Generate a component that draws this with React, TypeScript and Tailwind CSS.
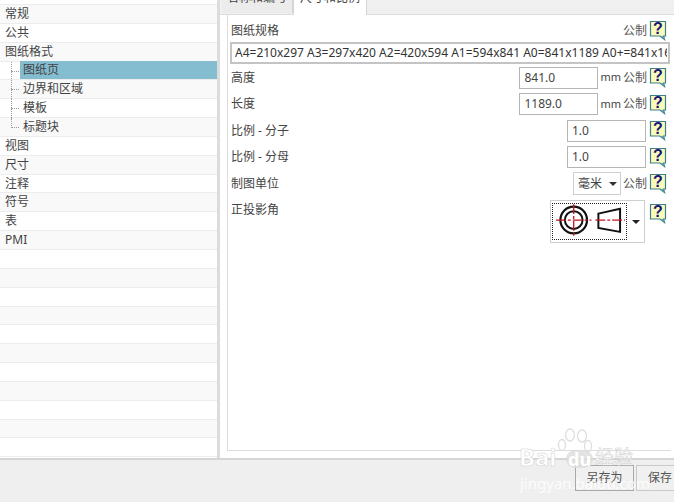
const treeItems = [
  { label: "", h: "h-[5px]" },
  { label: "常规" },
  { label: "公共" },
  { label: "图纸格式" },
  { label: "图纸页", child: true, selected: true },
  { label: "边界和区域", child: true },
  { label: "模板", child: true },
  { label: "标题块", child: true, last: true },
  { label: "视图" },
  { label: "尺寸" },
  { label: "注释" },
  { label: "符号" },
  { label: "表" },
  { label: "PMI" },
  ...Array.from({ length: 11 }, () => ({ label: "" })),
];

function TreeRow({ item, index }: { item: any; index: number }) {
  return (
    <div
      className={`relative flex shrink-0 items-center border-b border-[#ececec] ${item.h ?? "h-[18.85px]"} ${
        index % 2 === 1 ? "bg-[#f9f9f9]" : "bg-white"
      }`}
    >
      {item.child ? (
        <>
          <span
            className={`absolute left-[11px] top-0 border-l border-dotted border-[#999] ${
              item.last ? "h-[10px]" : "h-[19px]"
            }`}
          />
          <span className="absolute left-[11px] top-[9px] w-[8px] border-t border-dotted border-[#999]" />
          <span
            className={`ml-[20px] flex h-[18px] flex-1 items-center pl-[3px] ${
              item.selected ? "bg-[#84bdd0]" : ""
            }`}
          >
            {item.label}
          </span>
        </>
      ) : (
        <span className="pl-[5px]">{item.label}</span>
      )}
    </div>
  );
}

function HelpIcon({ className = "" }: { className?: string }) {
  return (
    <svg width="18" height="21" viewBox="0 0 18 21" className={`shrink-0 ${className}`}>
      <path d="M1.5 1.5h15v14.5h-2l1 3.500-4.500-3.500H1.500z" fill="#fbfbb8" stroke="#3d7f8e" strokeWidth="1.200" />
      <path d="M12 16.500l3.500 3-0.700-3.500z" fill="#4d9aa8" />
      <text x="9" y="14" textAnchor="middle" fontSize="16" fontWeight="700" fill="#16167e" fontFamily="Liberation Sans, sans-serif">
        ?
      </text>
    </svg>
  );
}

function NumberInput({ value }: { value: string }) {
  return <div className="flex h-[22px] w-[79px] items-center border border-[#b5b5b5] bg-white pl-[4px]">{value}</div>;
}

function FormRow({ label, height, children }: { label: string; height: string; children: React.ReactNode }) {
  return (
    <div className={`flex items-center pr-[4px] ${height}`}>
      <span className="flex-1">{label}</span>
      {children}
    </div>
  );
}

function Metric() {
  return <span className="mr-[2px] ml-[2px] text-[#555]">公制</span>;
}

function Mm() {
  return <span className="ml-[2px] text-[11px]">mm</span>;
}

function ProjectionIcon() {
  return (
    <svg width="74" height="35" viewBox="0 0 74 35">
      <circle cx="21" cy="16" r="13.500" fill="none" stroke="#111" strokeWidth="2.200" />
      <circle cx="21" cy="16" r="9" fill="none" stroke="#111" strokeWidth="2" />
      <path d="M46 9.500l22-5v23.500l-22-4z" fill="none" stroke="#111" strokeWidth="2" />
      <path d="M3 16h36M43 16h30M21 0v32" stroke="#c0141f" strokeWidth="1.300" strokeDasharray="10 2 3 2" />
    </svg>
  );
}

export default function App() {
  return (
    <div
      className="relative flex h-[502px] w-[674px] flex-col overflow-hidden bg-[#efefef] text-[12px] text-[#444]"
      style={{ fontFamily: '"Noto Sans", "Noto Sans CJK SC", sans-serif' }}
    >
      <div className="flex h-[460px] shrink-0 border-b-2 border-[#d5d5d5]">
        <div className="flex w-[220px] shrink-0 flex-col overflow-hidden border-r-[3px] border-[#dcdcdc] bg-white">
          {treeItems.map((item, i) => (
            <TreeRow key={i} item={item} index={i} />
          ))}
        </div>

        <div className="flex flex-1 flex-col overflow-hidden bg-[#f0f0f0]">
          <div className="flex h-[15px] shrink-0 items-start border-b border-[#dcdcdc] pl-[2px]">
            <div className="flex h-[13px] w-[71px] justify-center overflow-hidden border-r border-[#d5d5d5] bg-[#ececec] leading-[12px]">
              <span className="-mt-[8px]">名称和编号</span>
            </div>
            <div className="flex h-[15px] w-[74px] justify-center overflow-hidden border-x border-[#d5d5d5] bg-white leading-[12px]">
              <span className="-mt-[8px]">尺寸和比例</span>
            </div>
          </div>
          <div className="flex flex-1 bg-white pb-[7px] pl-[7px]">
            <div className="flex flex-1 flex-col border-b border-l border-[#dddddd] pl-[3px] pt-[5px]">
              <FormRow label="图纸规格" height="h-[21px]">
                <Metric />
                <HelpIcon />
              </FormRow>
              <div className="-ml-px mt-px flex h-[22px] w-[440px] items-center border-2 border-[#c4c4c4] pl-[3px] pr-[1px] text-[#333]">
                <span className="overflow-hidden whitespace-nowrap">
                  A4=210x297 A3=297x420 A2=420x594 A1=594x841 A0=841x1189 A0+=841x1682
                </span>
              </div>
              <FormRow label="高度" height="h-[27px]">
                <NumberInput value="841.0" />
                <Mm />
                <Metric />
                <HelpIcon />
              </FormRow>
              <FormRow label="长度" height="h-[26px]">
                <NumberInput value="1189.0" />
                <Mm />
                <Metric />
                <HelpIcon />
              </FormRow>
              <FormRow label="比例 - 分子" height="h-[27px]">
                <NumberInput value="1.0" />
                <span className="w-[3px]" />
                <HelpIcon />
              </FormRow>
              <FormRow label="比例 - 分母" height="h-[26px]">
                <NumberInput value="1.0" />
                <span className="w-[3px]" />
                <HelpIcon />
              </FormRow>
              <FormRow label="制图单位" height="h-[27px]">
                <div className="flex h-[23px] w-[48px] items-center border border-[#cfcfcf] pl-[4px]">
                  毫米
                  <span className="ml-[7px] border-x-[4px] border-t-[4px] border-x-transparent border-t-[#333]" />
                </div>
                <Metric />
                <HelpIcon />
              </FormRow>
              <div className="flex items-start pr-[4px] pt-[3px]">
                <span className="flex-1 pt-px">正投影角</span>
                <div className="flex h-[43px] w-[95px] items-center border border-[#cfcfcf] pl-px">
                  <div className="flex h-[37px] w-[75px] items-center border border-dotted border-[#222]">
                    <ProjectionIcon />
                  </div>
                  <span className="ml-[5px] border-x-[4px] border-t-[4px] border-x-transparent border-t-[#222]" />
                </div>
                <span className="w-[4px]" />
                <HelpIcon className="mt-[3px]" />
              </div>
            </div>
            <div className="w-[3px] shrink-0" />
          </div>
        </div>
      </div>

      <div className="flex flex-1 justify-end gap-[2px] pt-[5px]">
        <div className="flex h-[26px] w-[59px] items-center justify-center border border-[#a9a9a9] bg-[#f0f0f0] text-[#555]">
          另存为
        </div>
        <div className="flex h-[26px] w-[38px] items-center overflow-hidden border border-r-0 border-[#c9c9c9] bg-[#f0f0f0] pl-[11px] text-[#555]">
          保存
        </div>
      </div>

      <div className="pointer-events-none absolute left-[518px] top-[428px] h-[66px] w-[130px]">
        <svg width="36" height="28" viewBox="0 0 36 28" className="absolute left-[39px] top-0">
          <g fill="none" stroke="#dedede" strokeWidth="1.300">
            <ellipse cx="5" cy="17" rx="3.500" ry="5.500" />
            <ellipse cx="13" cy="7" rx="4.500" ry="6" />
            <ellipse cx="25" cy="8" rx="4.500" ry="6" />
            <ellipse cx="31" cy="18" rx="3.500" ry="5.500" />
          </g>
        </svg>
        <span className="absolute left-[1px] top-[15px] text-[24px] font-bold leading-[28px] text-white [-webkit-text-stroke:0.5px_#cfcfcf]">
          Bai
        </span>
        <span className="absolute left-[48px] top-[22px] rounded-[10px] bg-[#dcdcdc]/80 px-[2px] text-[18px] font-bold leading-[18px] text-white">
          du
        </span>
        <span className="absolute left-[77px] top-[17px] text-[19px] leading-[24px] text-white [-webkit-text-stroke:0.5px_#cfcfcf]">
          经验
        </span>
        <span className="absolute left-[2px] top-[46px] text-[15px] leading-[18px] text-white/80">
          jingyan.baidu.com
        </span>
      </div>
    </div>
  );
}
